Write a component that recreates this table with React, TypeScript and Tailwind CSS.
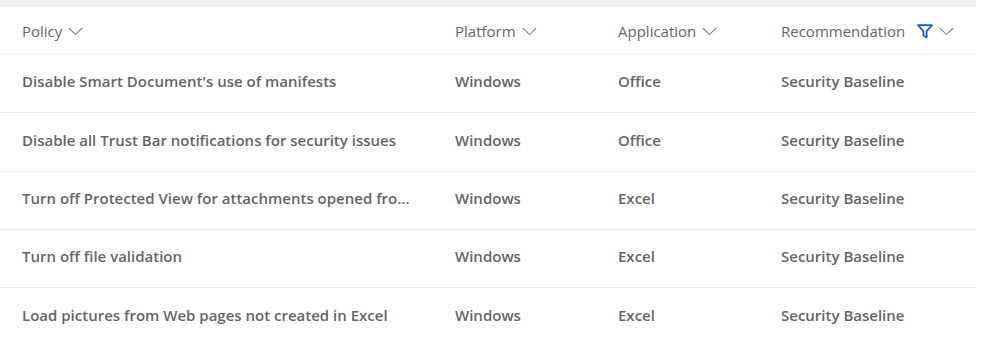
import React from 'react';

const rows = [
  { policy: "Disable Smart Document's use of manifests", platform: 'Windows', app: 'Office', rec: 'Security Baseline' },
  { policy: 'Disable all Trust Bar notifications for security issues', platform: 'Windows', app: 'Office', rec: 'Security Baseline' },
  { policy: 'Turn off Protected View for attachments opened fro...', platform: 'Windows', app: 'Excel', rec: 'Security Baseline' },
  { policy: 'Turn off file validation', platform: 'Windows', app: 'Excel', rec: 'Security Baseline' },
  { policy: 'Load pictures from Web pages not created in Excel', platform: 'Windows', app: 'Excel', rec: 'Security Baseline' },
];

const Chevron = () => (
  <svg width="15" height="9" viewBox="0 0 15 9" fill="none" className="ml-[6px] mt-[1px]">
    <path d="M0.8 1 L7.5 7.6 L14.2 1" stroke="#8a8886" strokeWidth="1.1" />
  </svg>
);

const Funnel = () => (
  <svg width="16" height="15" viewBox="0 0 16 15" fill="none">
    <path d="M1 1.2 H15 L9.6 7.2 V13.6 L6.4 11.6 V7.2 Z" stroke="#0f5bd6" strokeWidth="1.8" strokeLinejoin="round" />
  </svg>
);

const cols = 'grid grid-cols-[433px_163px_163px_217px]';

export default function App() {
  return (
    <div className="w-[996px] h-[360px] bg-white font-['Open_Sans',sans-serif] text-[#676563] overflow-hidden">
      <div className="w-[976px]">
        <div className="h-[7px] bg-[#f3f2f1]" />
        <div className={`${cols} h-[48px] items-center border-b border-[#edebe9] text-[15px] pt-[1px]`}>
          <div className="pl-[22px] flex items-center">Policy<Chevron /></div>
          <div className="pl-[22px] flex items-center">Platform<Chevron /></div>
          <div className="pl-[22px] flex items-center">Application<Chevron /></div>
          <div className="pl-[22px] flex items-center">
            Recommendation
            <span className="ml-[12px]"><Funnel /></span>
            <Chevron />
          </div>
        </div>
        {rows.map((r, i) => (
          <div
            key={i}
            className={`${cols} h-[58.3px] items-center text-[15px] font-semibold pb-[4px] ${i < rows.length - 1 ? 'border-b border-[#edebe9]' : ''}`}
          >
            <div className="pl-[22px] whitespace-nowrap">{r.policy}</div>
            <div className="pl-[22px]">{r.platform}</div>
            <div className="pl-[22px]">{r.app}</div>
            <div className="pl-[22px]">{r.rec}</div>
          </div>
        ))}
      </div>
    </div>
  );
}
